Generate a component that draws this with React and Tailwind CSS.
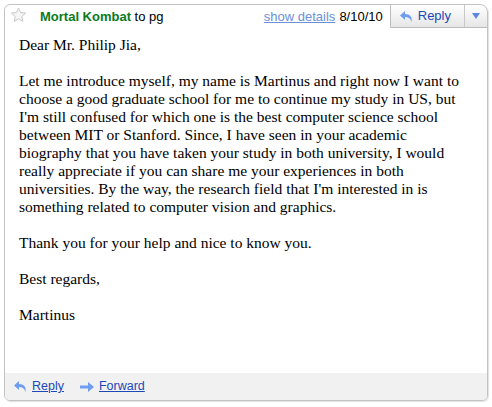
export default function App() {
  return (
    <div className="w-[492px] h-[407px] bg-white p-[4px] pr-[4px]">
      <div className="h-[397px] w-[484px] border border-[#c3c3c3] rounded-[6px] rounded-tr-[8px] flex flex-col overflow-hidden shadow-[1px_1px_1px_rgba(0,0,0,0.12)]">
        {/* HEADER */}
        <div className="flex items-start h-[24px] font-['Liberation_Sans',Arial,sans-serif] text-[13px]">
          <svg width="17" height="16" viewBox="0 0 17 16" className="ml-[5px] mt-[2px]">
            <path
              d="M8.5 1 L10.6 5.6 L15.6 6.1 L11.8 9.4 L12.9 14.4 L8.5 11.8 L4.1 14.4 L5.2 9.4 L1.4 6.1 L6.4 5.6 Z"
              fill="#f6f6f6"
              stroke="#c8c8c8"
              strokeWidth="1"
              strokeLinejoin="round"
            />
          </svg>
          <div className="ml-[13px] mt-[2px] text-black">
            <span className="font-bold text-[#0b7a20]">Mortal Kombat</span> to pg
          </div>
          <div className="ml-auto mt-[2px] flex gap-[4px]">
            <span className="text-[#6b8fd8] underline">show details</span>
            <span className="text-black">8/10/10</span>
          </div>
          <div className="ml-[7px] -mt-px -mr-px flex h-[24px] border border-[#bdbdbd] rounded-tr-[8px] bg-gradient-to-b from-white to-[#e6e6e6]">
            <div className="flex items-center gap-[4px] pl-[8px] pr-[13px] border-r border-[#c8c8c8] text-[#1d48b8]">
              <ReplyIcon />
              <span className="text-[13px]">Reply</span>
            </div>
            <div className="w-[22px] flex items-center justify-center">
              <svg width="8" height="6" viewBox="0 0 8 6">
                <path d="M0 0 H8 L4 6 Z" fill="#5a8ae0" />
              </svg>
            </div>
          </div>
        </div>

        {/* BODY */}
        <div className="flex-1 px-[14px] pt-[7px] font-['Liberation_Serif','Times_New_Roman',serif] text-[15.5px] leading-[18px] text-black">
          <p className="mb-[18px]">Dear Mr. Philip Jia,</p>
          <p className="mb-[18px]">
            Let me introduce myself, my name is Martinus and right now I want to
            choose a good graduate school for me to continue my study in US, but
            I'm still confused for which one is the best computer science school
            between MIT or Stanford. Since, I have seen in your academic
            biography that you have taken your study in both university, I would
            really appreciate if you can share me your experiences in both
            universities. By the way, the research field that I'm interested in is
            something related to computer vision and graphics.
          </p>
          <p className="mb-[18px]">Thank you for your help and nice to know you.</p>
          <p className="mb-[18px]">Best regards,</p>
          <p>Martinus</p>
        </div>

        {/* FOOTER */}
        <div className="h-[27px] bg-[#f1f1f1] flex items-center pl-[8px] font-['Liberation_Sans',Arial,sans-serif] text-[12.5px] text-[#1d48b8]">
          <ReplyIcon />
          <span className="underline ml-[4px]">Reply</span>
          <svg width="15" height="12" viewBox="0 0 15 12" className="ml-[16px]">
            <path d="M0 4.5 H8 V1 L14 6 L8 11 V7.5 H0 Z" fill="#6f9ef0" />
          </svg>
          <span className="underline ml-[4px]">Forward</span>
        </div>
      </div>
    </div>
  );
}

function ReplyIcon() {
  return (
    <svg width="15" height="13" viewBox="0 0 15 13">
      <path
        d="M6 1 L1 5.5 L6 10 V7 C9.5 7 11.5 8.5 12.5 12 C13.5 7 11 4 6 4 Z"
        fill="#6f9ef0"
      />
    </svg>
  );
}
